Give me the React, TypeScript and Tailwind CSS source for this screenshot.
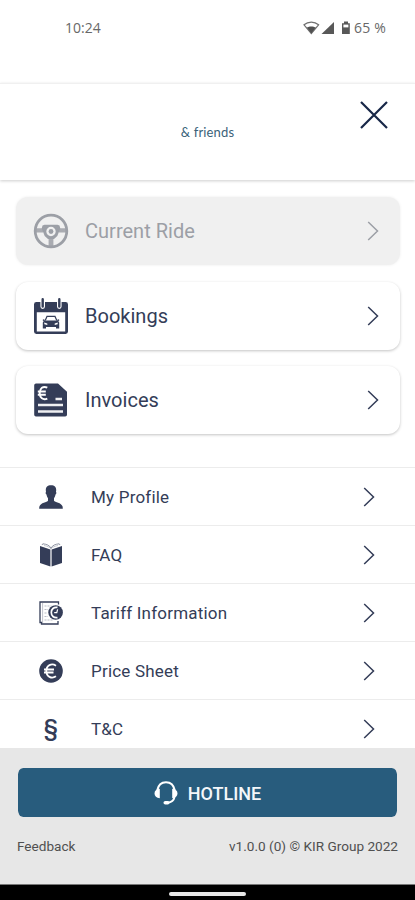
import React from 'react';

interface IconProps {
    className?: string;
}

const SteeringWheelIcon: React.FC<IconProps> = ({ className }) => (
    <svg className={className} width="36" height="36" viewBox="0 0 36 36" fill="none">
        <circle cx="18" cy="18" r="15.8" stroke="currentColor" strokeWidth="2.8" />
        <path d="M3 15.2h7v4.400H3zM26 15.2h7v4.400h-7zM15.600 25.500h4.800v7.500h-4.800z" fill="currentColor" fillOpacity=".85" />
        <path
            fillRule="evenodd"
            d="M9.500 12.600l2-.800h13l2 .800.800 2.800-3 7.600-3.300 3h-6l-3.300-3-3-7.600zM18 13.800a4.700 4.700 0 1 0 0 9.400 4.700 4.700 0 0 0 0-9.400z"
            fill="currentColor"
        />
        <circle cx="18" cy="18.500" r="2.400" fill="currentColor" />
    </svg>
);

const CalendarCarIcon: React.FC<IconProps> = ({ className }) => (
    <svg className={className} width="36" height="36" viewBox="0 0 36 36" fill="none">
        <path
            fillRule="evenodd"
            d="M3.400 4H7.400v4.600a2.300 2.300 0 0 0 4.600 0V4h12v4.600a2.300 2.300 0 0 0 4.600 0V4h4A2.400 2.400 0 0 1 35 6.400v27.200a2.400 2.400 0 0 1-2.400 2.400H3.400A2.400 2.400 0 0 1 1 33.600V6.400A2.400 2.400 0 0 1 3.400 4zM3.800 14.200V33.400h28.400V14.200z"
            fill="currentColor"
        />
        <path d="M9.700 1.200v7.400M26.300 1.200v7.400" stroke="currentColor" strokeWidth="2.400" strokeLinecap="round" />
        <path d="M12.200 22.400l1.800-4h8l1.800 4" stroke="currentColor" strokeWidth="1.200" />
        <path
            fillRule="evenodd"
            d="M10 21.200l1.800.6-.3.800h13l-.3-.8 1.800-.6.300 1.200-1 .5.900 1.600V30.500h-3.200V29H13v1.500H9.800V24.500l.9-1.600-1-.5zM11.300 24.600v1.600l3 .7v-1.400zM24.700 24.600l-3 .9v1.400l3-.7z"
            fill="currentColor"
        />
    </svg>
);

const InvoiceIcon: React.FC<IconProps> = ({ className }) => (
    <svg className={className} width="36" height="36" viewBox="0 0 36 36" fill="none">
        <path d="M3 1.500h22L34 9.800V32.700a1.800 1.800 0 0 1-1.800 1.800H3a1.800 1.800 0 0 1-1.800-1.800V3.300A1.800 1.800 0 0 1 3 1.500z" fill="currentColor" />
        <path d="M14.300 5.600c-4.300-2-7.600.8-7.600 5.500s3.300 7.500 7.600 5.500M4.800 9.500h8M4.800 12.700h8" stroke="#fff" strokeWidth="1.900" />
        <path d="M22.500 17h6.500M5 23H30M5 29.500H30" stroke="#fff" strokeOpacity=".92" strokeWidth="2.300" />
    </svg>
);

const ProfileIcon: React.FC<IconProps> = ({ className }) => (
    <svg className={className} width="24" height="24" viewBox="0 0 24 24" fill="currentColor">
        <path d="M12 .2c3.600 0 5.200 1.800 5.200 4.700 0 .8-.1 1.500-.2 2 .7.300.4 2-.5 2.500-.3 1.700-.9 2.800-1.500 3.800v2.500c.7 1.300 7.600 2 8.500 5.600.3 1 .3 2.300.3 2.500H.2c0-.2 0-1.500.3-2.500.9-3.600 7.800-4.300 8.500-5.600v-2.500c-.6-1-1.200-2.100-1.500-3.800-.9-.5-1.200-2.200-.5-2.500-.1-.5-.2-1.200-.2-2C6.800 2 8.400.2 12 .2z" />
    </svg>
);

const BookIcon: React.FC<IconProps> = ({ className }) => (
    <svg className={className} width="24" height="24" viewBox="0 0 24 24" fill="none">
        <path d="M1 3l10.400 3.500v17L1 20zM23 3L12.600 6.500v17L23 20z" fill="currentColor" />
        <path d="M3 2l.8-1.200c4 .4 6.700 1.500 8.200 4.300 1.500-2.800 4.200-3.900 8.200-4.300L21 2" stroke="currentColor" strokeOpacity=".6" strokeWidth=".9" />
        <path d="M5 2.500c3.300.6 5.300 1.500 7 3.500 1.700-2 3.700-2.900 7-3.500" stroke="currentColor" strokeOpacity=".4" strokeWidth=".7" />
    </svg>
);

const TariffIcon: React.FC<IconProps> = ({ className }) => (
    <svg className={className} width="24" height="24" viewBox="0 0 24 24" fill="none">
        <path d="M19.500 3.500V1H1v20.500h1.500V23h16.500v-3" stroke="currentColor" strokeWidth="1.300" />
        <path d="M3.600 2v20" stroke="currentColor" strokeOpacity=".4" strokeWidth=".8" />
        <path d="M5.500 5h7M5.500 8.500h3.500M5.500 12h3M5.500 15.500h3.500M5.500 19h8" stroke="currentColor" strokeOpacity=".35" strokeDasharray="2 1" />
        <circle cx="16.600" cy="11.500" r="7.300" fill="currentColor" />
        <path d="M18.500 6.400c-3.800-.6-6.200 1.800-6.200 5.100s2.400 5.700 6.200 5.100" stroke="#fff" strokeWidth="1.700" />
        <path d="M15.200 11.600h2.600l.8-3.200" stroke="#fff" strokeWidth="1.200" />
    </svg>
);

const EuroCoinIcon: React.FC<IconProps> = ({ className }) => (
    <svg className={className} width="24" height="24" viewBox="0 0 24 24" fill="none">
        <circle cx="12" cy="12" r="11.800" fill="currentColor" />
        <path d="M17 6.700c-4.500-3-9.700-.2-9.700 5.300s5.200 8.300 9.700 5.300M5 10.500h10M5 13.500h9.500" stroke="#fff" strokeWidth="1.800" />
    </svg>
);

const SectionIcon: React.FC<IconProps> = ({ className }) => (
    <span className={`${className} flex h-6 w-6 items-center justify-center text-[23px] leading-6 font-medium`}>§</span>
);

const HeadsetIcon: React.FC = () => (
    <svg width="24" height="24" viewBox="0 0 24 24" fill="none">
        <path d="M3.200 9.500C4.200 4.500 7.500 1.300 12 1.300s7.800 3.200 8.800 8.200" stroke="#fff" strokeWidth="2.100" />
        <path d="M5.800 7.800v9.400C2.500 17 .5 15.200.5 12.500s2-4.500 5.300-4.700zM18.200 7.800v9.400c3.300-.2 5.300-2 5.300-4.700s-2-4.500-5.300-4.700z" fill="#fff" />
        <path d="M20.600 16c-.8 3.500-3.300 5.400-7 5.800" stroke="#fff" strokeWidth="1.900" />
        <rect x="9.500" y="20" width="6" height="3.600" rx="1.800" fill="#fff" />
    </svg>
);

const Chevron: React.FC<IconProps> = ({ className }) => (
    <svg className={className} width="12" height="20" viewBox="0 0 12 20" fill="none">
        <path d="M1.200 1L10.500 10L1.200 19" stroke="currentColor" strokeWidth="1.500" />
    </svg>
);

const cards = [
    { label: 'Current Ride', icon: SteeringWheelIcon, disabled: true },
    { label: 'Bookings', icon: CalendarCarIcon, disabled: false },
    { label: 'Invoices', icon: InvoiceIcon, disabled: false },
];

const links = [
    { label: 'My Profile', icon: ProfileIcon },
    { label: 'FAQ', icon: BookIcon },
    { label: 'Tariff Information', icon: TariffIcon },
    { label: 'Price Sheet', icon: EuroCoinIcon },
    { label: 'T&C', icon: SectionIcon },
];

const StatusBar: React.FC = () => (
    <div className="flex h-[83px] shrink-0 items-start justify-between pt-[18px] pr-[29px] pl-[65px] font-['Open_Sans',sans-serif] text-[14px] leading-5 text-[#686868]">
        <span>10:24</span>
        <div className="flex items-center">
            <svg width="48" height="16" viewBox="0 0 48 16" fill="none">
                <path d="M1 4.800C5.200 1.200 11.400 1.200 15.600 4.800L8.300 13.500z" stroke="#707070" strokeWidth="1.200" />
                <path d="M3.800 7.600C6.300 6 10.300 6 12.800 7.600L8.300 13.500z" fill="#505050" />
                <path d="M31 2v12H18.500z" fill="#585858" />
                <path d="M41 1.500h4v1.800h1.800V14h-7.800V3.300H41z" fill="#585858" />
                <path d="M40.400 4.600h5v2.800h-5z" fill="#fff" />
            </svg>
            <span className="ml-[3px] tracking-[0.2px]">65 %</span>
        </div>
    </div>
);

const App: React.FC = () => {
    return (
        <div className="flex h-[900px] w-[415px] flex-col overflow-hidden bg-white font-[Roboto,sans-serif] text-[#343d58]">
            <StatusBar />
            <header className="grid h-[97px] shrink-0 grid-cols-3 border-t border-[#f0f0f0] shadow-[0_1px_3px_rgba(0,0,0,0.2)]">
                <span className="col-start-2 mt-[38px] text-center font-[Lato,sans-serif] text-[13px] leading-5 tracking-[0.150px] text-[#3a6279]">&amp; friends</span>
                <button className="mt-[16px] mr-[26px] h-[30px] w-[30px] justify-self-end" aria-label="Close">
                    <svg width="30" height="30" viewBox="0 0 30 30" fill="none">
                        <path d="M2 2L28 28M28 2L2 28" stroke="#172747" strokeWidth="2.200" />
                    </svg>
                </button>
            </header>
            <div className="flex shrink-0 flex-col gap-[16.500px] pt-[17px] pr-[15px] pb-[33px] pl-[16px]">
                {cards.map(({ label, icon: Icon, disabled }) => (
                    <button
                        key={label}
                        disabled={disabled}
                        className={`flex h-[68px] items-center rounded-[12px] pr-[21px] pl-[17px] ${
                            disabled
                                ? 'bg-[#f0f0f0] text-[#9c9fa6] shadow-[0_0_3px_rgba(0,0,0,0.08)]'
                                : 'bg-white shadow-[0_1px_3px_rgba(0,0,0,0.24)]'
                        }`}
                    >
                        <Icon />
                        <span className="ml-4 text-[20px] tracking-[0.020px]">{label}</span>
                        <Chevron className="ml-auto" />
                    </button>
                ))}
            </div>
            <nav className="min-h-0 flex-1 overflow-hidden">
                {links.map(({ label, icon: Icon }) => (
                    <a key={label} className="flex h-[58px] items-center border-t border-[#ececec] pr-[40px] pl-[39px]">
                        <Icon className="shrink-0" />
                        <span className="mt-[3px] ml-7 text-[17px] tracking-[0.200px]">{label}</span>
                        <Chevron className="ml-auto" />
                    </a>
                ))}
            </nav>
            <footer className="h-[136px] shrink-0 bg-[#e7e7e7] px-[17px] pt-5">
                <button className="flex h-[49px] w-full items-center justify-center gap-2.5 rounded-[6px] border-x border-[#e7e7e7] bg-[#285c7d] bg-clip-padding pt-px text-[18px] font-medium text-[#f4f7fa]">
                    <HeadsetIcon />
                    HOTLINE
                </button>
                <div className="mt-[19px] flex justify-between text-[13.600px] leading-5 text-[#505050]">
                    <span>Feedback</span>
                    <span>v1.0.0 (0) © KIR Group 2022</span>
                </div>
            </footer>
            <div className="flex h-4 shrink-0 items-center justify-center border-t border-[#777] bg-black pt-0.5">
                <div className="h-1 w-[77px] rounded-full bg-[#e8e8e8]" />
            </div>
        </div>
    );
};

export default App;
